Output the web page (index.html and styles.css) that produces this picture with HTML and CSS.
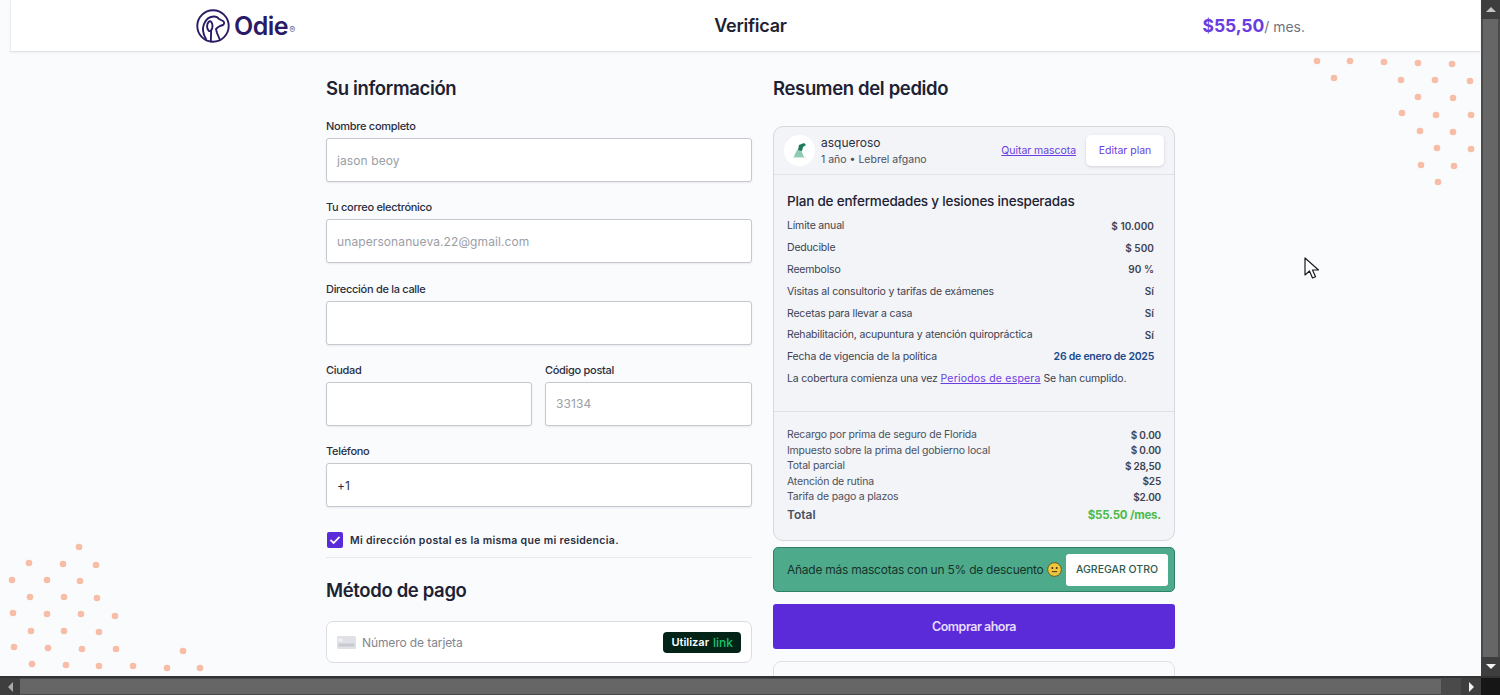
FILE: index.html
```html
<!DOCTYPE html>
<html lang="es">
<head>
<meta charset="utf-8">
<title>Verificar</title>
<link rel="stylesheet" href="styles.css">
</head>
<body>
<div class="window">
  <div class="viewport">
    <div class="page">
      <header class="topbar">
        <div class="logo">
          <svg class="logo-mark" viewBox="0 0 34 34" width="34" height="34" fill="none" stroke="#2b1a66" stroke-width="1.9" stroke-linecap="round" stroke-linejoin="round">
            <circle cx="17" cy="17" r="15.7"/>
            <path d="M10 30C7 25 6 20 8 15C10 10 14 7.500 18 7.500C20 7.500 22 8.500 23 10L27 12C28.500 13 28.500 15 27 16L24 17C22 18 21 19 20 20L21 24L24 31"/>
            <path d="M13 12.500C10.500 15 10.500 19 12.500 21.500C14.500 23.500 16.500 20 16.500 17C16.500 14 15 11.500 13 12.500Z"/>
            <path d="M15 22C15.500 25 14.500 28 15 32.500"/>
          </svg>
          <span class="logo-text">Odie</span><span class="logo-reg">®</span>
        </div>
        <h1 class="page-title">Verificar</h1>
        <div class="top-price"><b>$55,50</b><span>/ mes.</span></div>
      </header>

      <div class="columns">
        <section class="col-form">
          <h2 class="section-title">Su información</h2>
          <div class="field">
            <label class="label">Nombre completo</label>
            <div class="input ph">jason beoy</div>
          </div>
          <div class="field">
            <label class="label">Tu correo electrónico</label>
            <div class="input ph">unapersonanueva.22@gmail.com</div>
          </div>
          <div class="field">
            <label class="label">Dirección de la calle</label>
            <div class="input"></div>
          </div>
          <div class="field-row">
            <div class="field">
              <label class="label">Ciudad</label>
              <div class="input"></div>
            </div>
            <div class="field">
              <label class="label">Código postal</label>
              <div class="input ph">33134</div>
            </div>
          </div>
          <div class="field">
            <label class="label">Teléfono</label>
            <div class="input filled">+1</div>
          </div>
          <div class="check-row">
            <span class="checkbox">
              <svg viewBox="0 0 16 16" width="16" height="16" fill="none" stroke="#fff" stroke-width="1.8" stroke-linecap="round" stroke-linejoin="round"><path d="M4 8.400l2.700 2.600L12 5.400"/></svg>
            </span>
            <span class="check-text">Mi dirección postal es la misma que mi residencia.</span>
          </div>
          <h2 class="section-title pay-title">Método de pago</h2>
          <div class="card-input">
            <svg class="card-icon" viewBox="0 0 19 13" width="19" height="13"><rect width="19" height="13" rx="1.500" fill="#dfe1e6"/><rect x="1.500" y="7.500" width="16" height="3" fill="#c6c9d0"/><rect x="1.500" y="2.500" width="4" height="3" fill="#f1f2f4"/></svg>
            <span class="card-text">Número de tarjeta</span>
            <span class="link-btn"><span>Utilizar</span><em>link</em></span>
          </div>
        </section>

        <section class="col-summary">
          <h2 class="section-title">Resumen del pedido</h2>
          <div class="order-card">
            <div class="pet-head">
              <span class="avatar">
                <svg viewBox="0 0 20 20" width="20" height="20"><path d="M4 16c1-3 2-6 4-8l3 1 3 7z" fill="#8fcbb0"/><path d="M8 9l1-5 5-2 2 2-3 2-1 4z" fill="#1f7a5a"/><rect x="3" y="16" width="13" height="1" fill="#cfe9dc"/></svg>
              </span>
              <div class="pet-info">
                <div class="pet-name">asqueroso</div>
                <div class="pet-meta">1 año • Lebrel afgano</div>
              </div>
              <a class="remove-link">Quitar mascota</a>
              <span class="edit-btn">Editar plan</span>
            </div>
            <div class="plan">
              <h3 class="plan-title">Plan de enfermedades y lesiones inesperadas</h3>
              <div class="plan-row"><span>Límite anual</span><b>$ 10.000</b></div>
              <div class="plan-row"><span>Deducible</span><b>$ 500</b></div>
              <div class="plan-row"><span>Reembolso</span><b>90 %</b></div>
              <div class="plan-row"><span>Visitas al consultorio y tarifas de exámenes</span><b>Sí</b></div>
              <div class="plan-row"><span>Recetas para llevar a casa</span><b>Sí</b></div>
              <div class="plan-row"><span>Rehabilitación, acupuntura y atención quiropráctica</span><b>Sí</b></div>
              <div class="plan-row"><span>Fecha de vigencia de la política</span><b class="date">26 de enero de 2025</b></div>
              <div class="plan-row"><span>La cobertura comienza una vez <a class="wait-link">Periodos de espera</a> Se han cumplido.</span></div>
            </div>
            <div class="costs">
              <div class="cost-row"><span>Recargo por prima de seguro de Florida</span><b>$ 0.00</b></div>
              <div class="cost-row"><span>Impuesto sobre la prima del gobierno local</span><b>$ 0.00</b></div>
              <div class="cost-row"><span>Total parcial</span><b>$ 28,50</b></div>
              <div class="cost-row"><span>Atención de rutina</span><b>$25</b></div>
              <div class="cost-row"><span>Tarifa de pago a plazos</span><b>$2.00</b></div>
              <div class="total-row"><span>Total</span><b>$55.50 /mes.</b></div>
            </div>
          </div>
          <div class="promo">
            <span class="promo-text">Añade más mascotas con un 5% de descuento</span>
            <svg class="smile" viewBox="0 0 14 14" width="15" height="15"><circle cx="7" cy="7" r="6.400" fill="#f2c63c" stroke="#6b5a1c" stroke-width="0.900"/><circle cx="5" cy="5.600" r="0.900" fill="#3a3010"/><circle cx="9" cy="5.600" r="0.900" fill="#3a3010"/><path d="M4.500 9h5" stroke="#3a3010" stroke-width="0.900" fill="none"/></svg>
            <span class="promo-btn">AGREGAR OTRO</span>
          </div>
          <div class="buy-btn">Comprar ahora</div>
          <div class="next-card"></div>
        </section>
      </div>

      <svg class="dots dots-top" viewBox="1300 50 180 140" width="180" height="140" fill="#f7bda6">
        <circle cx="1317" cy="61" r="3.300"/><circle cx="1350" cy="61" r="3.300"/><circle cx="1384" cy="62" r="3.300"/><circle cx="1418" cy="63" r="3.300"/><circle cx="1452" cy="64" r="3.300"/><circle cx="1334" cy="78" r="3.300"/><circle cx="1401" cy="80" r="3.300"/><circle cx="1435" cy="80" r="3.300"/><circle cx="1470" cy="81" r="3.300"/><circle cx="1418" cy="97" r="3.300"/><circle cx="1453" cy="98" r="3.300"/><circle cx="1402" cy="113" r="3.300"/><circle cx="1436" cy="115" r="3.300"/><circle cx="1471" cy="115" r="3.300"/><circle cx="1420" cy="131" r="3.300"/><circle cx="1453" cy="132" r="3.300"/><circle cx="1437" cy="148" r="3.300"/><circle cx="1471" cy="149" r="3.300"/><circle cx="1421" cy="165" r="3.300"/><circle cx="1454" cy="166" r="3.300"/><circle cx="1438" cy="182" r="3.300"/>
      </svg>
      <svg class="dots dots-bottom" viewBox="0 536 210 140" width="210" height="140" fill="#f7bda6">
        <circle cx="79" cy="547" r="3.300"/><circle cx="29" cy="563" r="3.300"/><circle cx="63" cy="564" r="3.300"/><circle cx="96" cy="565" r="3.300"/><circle cx="12" cy="580" r="3.300"/><circle cx="47" cy="580" r="3.300"/><circle cx="80" cy="581" r="3.300"/><circle cx="30" cy="597" r="3.300"/><circle cx="64" cy="597" r="3.300"/><circle cx="97" cy="598" r="3.300"/><circle cx="13" cy="613" r="3.300"/><circle cx="47" cy="614" r="3.300"/><circle cx="81" cy="614" r="3.300"/><circle cx="115" cy="616" r="3.300"/><circle cx="31" cy="631" r="3.300"/><circle cx="64" cy="631" r="3.300"/><circle cx="99" cy="632" r="3.300"/><circle cx="14" cy="647" r="3.300"/><circle cx="48" cy="648" r="3.300"/><circle cx="82" cy="649" r="3.300"/><circle cx="116" cy="649" r="3.300"/><circle cx="183" cy="651" r="3.300"/><circle cx="32" cy="664" r="3.300"/><circle cx="66" cy="665" r="3.300"/><circle cx="99" cy="666" r="3.300"/><circle cx="133" cy="666" r="3.300"/><circle cx="167" cy="668" r="3.300"/><circle cx="200" cy="668" r="3.300"/>
      </svg>
      <svg class="cursor" viewBox="0 0 16 24" width="16" height="24"><path d="M1 1v17l4.500-4 3 7 3-1.300-3-6.700h6z" fill="#fff" stroke="#1c1c1c" stroke-width="1.200" stroke-linejoin="round"/></svg>
    </div>
    <div class="vscroll">
      <span class="arrow-btn"><i class="tri tri-up"></i></span>
      <div class="vtrack"><div class="vthumb"></div></div>
      <span class="arrow-btn"><i class="tri tri-down"></i></span>
    </div>
  </div>
  <div class="hscroll">
    <span class="arrow-btn"><i class="tri tri-left"></i></span>
    <div class="htrack"><div class="hthumb"></div></div>
    <span class="arrow-btn"><i class="tri tri-right"></i></span>
    <span class="corner"></span>
  </div>
</div>
</body>
</html>
```
FILE: styles.css
```css
* { box-sizing: border-box; }
html, body { margin: 0; height: 100%; overflow: hidden; }
body { font-family: Inter, "Liberation Sans", sans-serif; color: #1d2233; background: #fafbfd; }

.window { display: flex; flex-direction: column; width: 1500px; height: 695px; }
.viewport { flex: 1; display: flex; min-height: 0; }
.page { position: relative; flex: 1; min-width: 0; overflow: hidden; background: #fafbfd; }

.topbar {
  display: grid; grid-template-columns: 1fr auto 1fr; align-items: center;
  height: 52px; margin-left: 10px; margin-right: 1px; padding: 0 175px 0 185px;
  background: #fff; border-bottom: 1px solid #e2e3e8; border-left: 1px solid #eceef1;
  box-shadow: 0 1px 2px rgba(20, 20, 40, .05);
}
.logo { display: flex; align-items: center; }
.logo-mark { flex: none; }
.logo-text { margin-left: 4px; font-size: 25px; font-weight: 600; letter-spacing: -.5px; color: #2b1a66; }
.logo-reg { margin: 8px 0 0 1px; font-size: 9px; color: #6d6497; }
.page-title { margin: 0; font-size: 18px; font-weight: 600; letter-spacing: -.25px; color: #1d2233; }
.top-price { justify-self: end; display: flex; align-items: baseline; font-size: 14px; color: #6f7480; }
.top-price b { font-size: 17.5px; font-weight: 700; letter-spacing: -.1px; color: #6a3de0; }

.columns { display: flex; gap: 21px; padding: 24px 0 0 326px; }
.col-form { flex: none; width: 426px; }
.col-summary { flex: none; width: 402px; }
.section-title { margin: 0; height: 24px; line-height: 24px; font-size: 18.5px; font-weight: 600; letter-spacing: -.35px; color: #1d2233; }

.field { margin-bottom: 18.25px; }
.label { display: block; height: 14px; margin: 0; line-height: 14px; font-size: 11px; font-weight: 500; color: #2a2f3f; letter-spacing: -.3px; }
.col-form > .section-title + .field { margin-top: 19px; }
.input {
  display: flex; align-items: center; height: 44px; margin-top: 5px; padding: 0 10px;
  background: #fff; border: 1px solid #c6c8ce; border-radius: 3px;
  box-shadow: 0 1px 2px rgba(30, 30, 50, .08);
  font-size: 12px; letter-spacing: .1px;
}
.ph { color: #9a9ea6; }
.filled { color: #2a2f3f; }
.field-row { display: grid; grid-template-columns: 206px 207px; gap: 13px; }

.check-row { display: flex; align-items: center; gap: 8px; height: 24px; margin-top: 3.25px; padding-left: 1px; }
.checkbox { flex: none; display: flex; width: 16px; height: 16px; margin-top: 6px; background: #5b2bd9; border-radius: 2px; }
.check-text { margin-top: 6px; margin-left: -1px; font-size: 10.5px; font-weight: 600; letter-spacing: .3px; color: #2a2f3f; }
.pay-title { margin-top: 8px; padding-top: 20px; box-sizing: content-box; border-top: 1px solid #e8e9ed; }

.card-input {
  display: flex; align-items: center; height: 42px; margin-top: 19px; padding: 0 10px;
  background: #fff; border: 1px solid #dcdde2; border-radius: 7px;
}
.card-icon { flex: none; }
.card-text { margin-left: 6px; flex: 1; font-size: 12px; letter-spacing: -.1px; color: #82868f; }
.link-btn { display: flex; align-items: center; gap: 4px; height: 21px; padding: 0 8px; background: #022316; border-radius: 4px; font-size: 11px; font-weight: 600; color: #fff; }
.link-btn em { font-style: normal; font-weight: 500; color: #19c26d; font-size: 12px; }

.order-card {
  margin-top: 26px; height: 415px; background: #f3f4f7;
  border: 1px solid #d6d8dd; border-radius: 10px; overflow: hidden;
}
.pet-head { display: flex; align-items: center; height: 48px; padding: 0 10px; border-bottom: 1px solid #e2e3e7; }
.avatar { flex: none; display: flex; align-items: center; justify-content: center; width: 31px; height: 31px; background: #fff; border-radius: 50%; }
.pet-info { flex: 1; margin-left: 6px; }
.pet-name { font-size: 12px; line-height: 15px; color: #2a2f3f; }
.pet-meta { margin-top: 2px; font-size: 10.5px; line-height: 15px; color: #4b5060; }
.remove-link { font-size: 10.5px; color: #6a3de0; text-decoration: underline; letter-spacing: -.05px; }
.edit-btn { display: flex; align-items: center; justify-content: center; width: 78px; height: 31px; margin-left: 10px; background: #fff; border-radius: 5px; box-shadow: 0 1px 3px rgba(30, 30, 50, .15); font-size: 10.5px; color: #6a3de0; }

.plan { height: 237px; padding: 18px 20px 0 13px; border-bottom: 1px solid #dfe0e5; }
.plan-title { margin: 0 0 5px; font-size: 13.5px; line-height: 17px; font-weight: 500; letter-spacing: -.2px; color: #1d2233; }
.plan-row { display: flex; justify-content: space-between; align-items: center; height: 21.8px; font-size: 10.5px; letter-spacing: -.18px; color: #3d4252; }
.plan-row b { font-size: 10px; font-weight: 600; letter-spacing: .05px; color: #3d4252; }
.plan-row .date { font-size: 10.5px; letter-spacing: -.25px; color: #1a4a8c; }
.wait-link { color: #6a3de0; text-decoration: underline; letter-spacing: .2px; }

.costs { padding: 15px 13px 0; }
.cost-row { display: flex; justify-content: space-between; align-items: center; height: 15.5px; font-size: 10.5px; letter-spacing: -.2px; color: #4b5060; }
.cost-row b { font-size: 10px; font-weight: 600; color: #3d4252; }
.total-row { display: flex; justify-content: space-between; align-items: center; height: 20px; font-size: 12px; font-weight: 600; color: #4b5060; }
.total-row b { font-size: 11.5px; font-weight: 700; letter-spacing: -.2px; color: #4cbb4c; }

.promo {
  display: flex; align-items: center; height: 45px; margin-top: 6px; padding: 0 6px 0 13px;
  background: #4dab8c; border: 1px solid #2f8066; border-radius: 5px;
}
.promo-text { font-size: 12px; color: #17332b; letter-spacing: -.25px; white-space: nowrap; }
.smile { flex: none; margin-left: 3px; }
.promo-btn { display: flex; align-items: center; justify-content: center; width: 102px; height: 32px; margin-left: auto; background: #fff; border-radius: 3px; font-size: 10.5px; font-weight: 500; color: #2d5a4c; }

.buy-btn { display: flex; align-items: center; justify-content: center; height: 45px; margin-top: 12px; background: #5b2bd9; border-radius: 3px; font-size: 12.5px; font-weight: 600; letter-spacing: -.5px; color: #e6dcff; }
.next-card { height: 60px; margin-top: 12px; border: 1px solid #dfe0e5; border-radius: 8px; background: #fafbfd; }

.dots { position: absolute; }
.dots-top { left: 1300px; top: 50px; }
.dots-bottom { left: 0; top: 536px; }
.cursor { position: absolute; left: 1304px; top: 257px; }

.vscroll { flex: none; display: flex; flex-direction: column; width: 19px; background: #3e3e3e; }
.vtrack { flex: 1; padding: 0 2px; background: #4a4a4a; }
.vthumb { width: 15px; height: 100%; background: #666; }
.hscroll { flex: none; display: flex; height: 19px; background: #3e3e3e; border-top: 2px solid #333; }
.htrack { flex: 1; padding: 1px 0; background: #4a4a4a; }
.hthumb { width: 1421px; height: 100%; background: #666; }
.arrow-btn { flex: none; display: flex; align-items: center; justify-content: center; width: 19px; height: 19px; }
.hscroll .arrow-btn { height: 17px; width: 20px; }
.corner { flex: none; width: 19px; background: #161616; }
.tri { width: 0; height: 0; border: 4px solid transparent; }
.tri-up { border-top: 0; border-bottom-color: #c4c4c4; border-left-width: 5px; border-right-width: 5px; border-bottom-width: 5px; }
.tri-down { border-bottom: 0; border-top-color: #f2f2f2; border-left-width: 5px; border-right-width: 5px; border-top-width: 5px; }
.tri-left { border-left: 0; border-right-color: #a8a8a8; border-top-width: 5px; border-bottom-width: 5px; border-right-width: 5px; }
.tri-right { border-right: 0; border-left-color: #f2f2f2; border-top-width: 5px; border-bottom-width: 5px; border-left-width: 5px; }
```
